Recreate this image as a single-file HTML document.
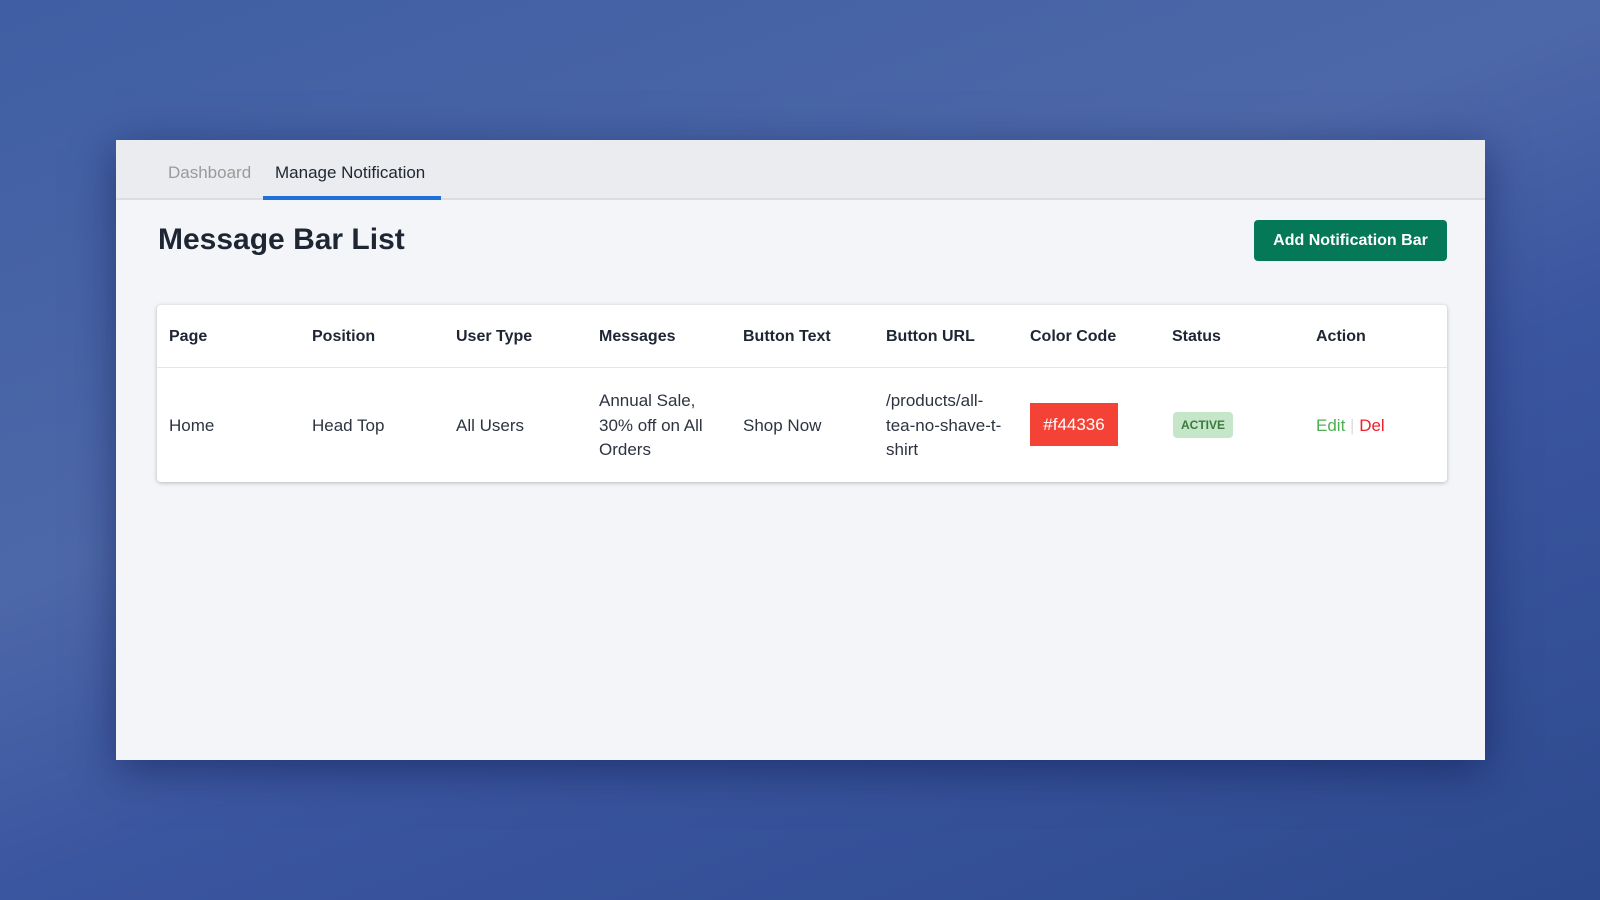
<!DOCTYPE html>
<html><head><meta charset="utf-8"><style>
*{margin:0;padding:0;box-sizing:border-box}
body{width:1600px;height:900px;overflow:hidden;font-family:"Liberation Sans",sans-serif;
background:linear-gradient(160deg,#3f5ea3 0%,#4d68a8 40%,#3b56a0 60%,#2e4a8e 100%);position:relative}
.panel{position:absolute;left:116px;top:140px;width:1369px;height:620px;background:#f4f5f8;box-shadow:0 10px 40px rgba(10,20,70,.5)}
.tabs{height:60px;background:#ebecef;border-bottom:2px solid #dcdde0;position:relative}
.tab{position:absolute;top:23px;font-size:17px}
.t1{left:52px;color:#9a9a9a}
.t2{left:159px;color:#202833}
.ul{position:absolute;left:147px;width:178px;top:56px;height:4px;background:#1f6fd8}
h1{position:absolute;left:42px;top:83px;font-size:30px;color:#1e2633;font-weight:bold}
.btn{position:absolute;left:1138px;top:80px;width:193px;height:41px;background:#047857;color:#fff;border-radius:4px;font-weight:bold;font-size:16px;text-align:center;line-height:41px}
.card{position:absolute;left:41px;top:165px;width:1290px;height:177px;background:#fff;border-radius:4px;box-shadow:0 1px 4px rgba(0,0,0,.25)}
.hd{height:63px;border-bottom:1px solid #e4e5e8;position:relative}
.c{position:absolute;font-size:17px;color:#2d3440}
.hd .c{top:23px;font-weight:bold;color:#1e2633;font-size:16px}
.row .c{line-height:24.5px}
.box{position:absolute;left:873px;top:98px;width:88px;height:43px;background:#f44336;color:#fff;font-size:17px;text-align:center;line-height:43px}
.act{position:absolute;left:1016px;top:107px;width:60px;height:26px;background:#c6e6c9;color:#3b7a3e;border-radius:4px;font-size:12px;font-weight:bold;text-align:center;line-height:26px}
</style></head><body>
<div class="panel">
<div class="tabs"><span class="tab t1">Dashboard</span><span class="tab t2">Manage Notification</span><div class="ul"></div></div>
<h1>Message Bar List</h1>
<div class="btn">Add Notification Bar</div>
<div class="card">
<div class="hd">
<span class="c" style="left:12px">Page</span><span class="c" style="left:155px">Position</span><span class="c" style="left:299px">User Type</span><span class="c" style="left:442px">Messages</span><span class="c" style="left:586px">Button Text</span><span class="c" style="left:729px">Button URL</span><span class="c" style="left:873px">Color Code</span><span class="c" style="left:1015px">Status</span><span class="c" style="left:1159px">Action</span>
</div>
<div class="row">
<span class="c" style="left:12px;top:109px">Home</span>
<span class="c" style="left:155px;top:109px">Head Top</span>
<span class="c" style="left:299px;top:109px">All Users</span>
<span class="c" style="left:442px;top:84px">Annual Sale,<br>30% off on All<br>Orders</span>
<span class="c" style="left:586px;top:109px">Shop Now</span>
<span class="c" style="left:729px;top:84px">/products/all-<br>tea-no-shave-t-<br>shirt</span>
<div class="box">#f44336</div>
<div class="act">ACTIVE</div>
<span class="c" style="left:1159px;top:109px"><span style="color:#4caf50">Edit</span> <span style="color:#ddd">|</span> <span style="color:#f01d2c">Del</span></span>
</div>
</div>
</div>
</body></html>
